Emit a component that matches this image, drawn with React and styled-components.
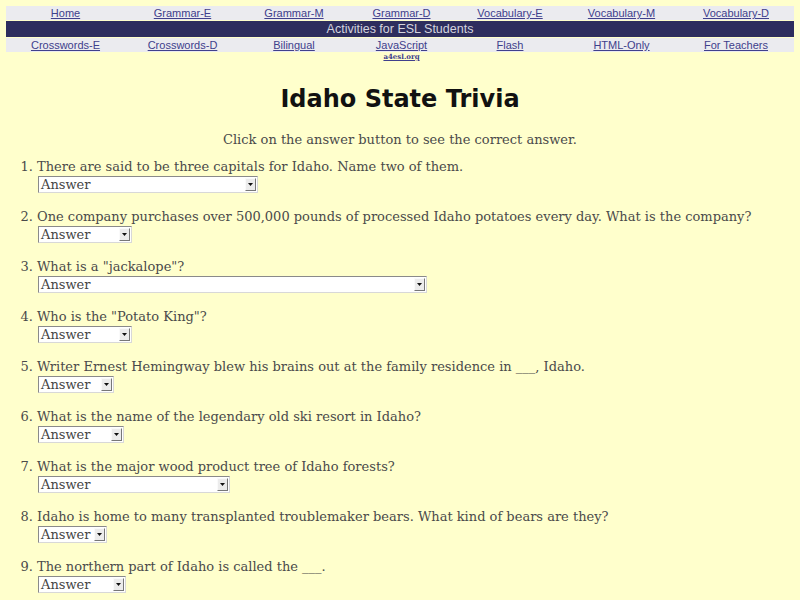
import React from "react";
import styled, { createGlobalStyle } from "styled-components";

const Global = createGlobalStyle`
  html, body { margin: 0; padding: 0; background: #ffffcc; }
  body { font-family: "DejaVu Serif", serif; color: #4a4a4a; }
`;

const Page = styled.div`
  padding: 6px 6px 0 6px;
`;

const cols = "119fr 115fr 108fr 107fr 110fr 113fr 116fr";

const NavRow = styled.div`
  display: grid;
  grid-template-columns: ${cols};
  background: #ebebef;
  height: 14px;
  align-items: center;
`;

const NavLink = styled.a`
  justify-self: center;
  font-family: "Liberation Sans", Arial, sans-serif;
  font-size: 11px;
  line-height: 14px;
  color: #40408c;
  text-decoration: underline;
`;

const Banner = styled.div`
  background: #2e2e5e;
  color: #d4d4de;
  font-family: "Liberation Sans", Arial, sans-serif;
  font-size: 12.5px;
  height: 16px;
  line-height: 16px;
  text-align: center;
  margin: 1px 0;
`;

const SubRow = styled.div`
  display: grid;
  grid-template-columns: ${cols};
  height: 10px;
  align-items: center;
`;

const SiteTag = styled.a`
  grid-column: 4;
  justify-self: center;
  font-family: "DejaVu Serif", serif;
  font-weight: bold;
  font-size: 7px;
  line-height: 10px;
  color: #40408c;
  text-decoration: underline;
`;

const Title = styled.h1`
  margin: 23px 0 0;
  text-align: center;
  font-family: "Comic Sans MS", "DejaVu Sans", sans-serif;
  font-weight: bold;
  font-size: 24px;
  line-height: 28px;
  color: #111;
`;

const Intro = styled.p`
  margin: 19px 0 0;
  text-align: center;
  font-size: 13px;
  line-height: 16px;
`;

const List = styled.ol`
  margin: 11px 0 0;
  padding-left: 31px;
  font-size: 13px;
  line-height: 16px;
`;

const Item = styled.li`
  margin-bottom: 16px;
`;

const Question = styled.div`
  height: 17px;
`;

const Answer = styled.div`
  display: flex;
  align-items: stretch;
  width: ${(p) => p.$w}px;
  height: 17px;
  box-sizing: border-box;
  margin-left: 1px;
  background: #fff;
  border-top: 1px solid #8a8a8a;
  border-left: 1px solid #8a8a8a;
  border-right: 1px solid #d8d8d8;
  border-bottom: 1px solid #d8d8d8;
`;

const AnswerText = styled.span`
  flex: 1;
  padding-left: 2px;
  font-size: 13px;
  line-height: 15px;
  color: #444;
  overflow: hidden;
  white-space: nowrap;
`;

const ArrowButton = styled.span`
  width: 11px;
  margin: 1px;
  box-sizing: border-box;
  background: #ececec;
  border-top: 1px solid #fafafa;
  border-left: 1px solid #fafafa;
  border-right: 1px solid #777;
  border-bottom: 1px solid #777;
  display: flex;
  align-items: center;
  justify-content: center;
`;

const questions = [
  ["There are said to be three capitals for Idaho. Name two of them.", 220],
  ["One company purchases over 500,000 pounds of processed Idaho potatoes every day. What is the company?", 94],
  ["What is a \"jackalope\"?", 389],
  ["Who is the \"Potato King\"?", 94],
  ["Writer Ernest Hemingway blew his brains out at the family residence in ___, Idaho.", 76],
  ["What is the name of the legendary old ski resort in Idaho?", 86],
  ["What is the major wood product tree of Idaho forests?", 192],
  ["Idaho is home to many transplanted troublemaker bears. What kind of bears are they?", 69],
  ["The northern part of Idaho is called the ___.", 88],
];

const topLinks = ["Home", "Grammar-E", "Grammar-M", "Grammar-D", "Vocabulary-E", "Vocabulary-M", "Vocabulary-D"];
const bottomLinks = ["Crosswords-E", "Crosswords-D", "Bilingual", "JavaScript", "Flash", "HTML-Only", "For Teachers"];

function AnswerBox({ width }) {
  return (
    <Answer $w={width}>
      <AnswerText>Answer</AnswerText>
      <ArrowButton>
        <svg width="5" height="3" viewBox="0 0 5 3">
          <path d="M0 0 H5 L2.5 3 Z" fill="#111" />
        </svg>
      </ArrowButton>
    </Answer>
  );
}

export default function App() {
  return (
    <Page>
      <Global />
      <NavRow>
        {topLinks.map((l) => (
          <NavLink key={l} href="#">{l}</NavLink>
        ))}
      </NavRow>
      <Banner>Activities for ESL Students</Banner>
      <NavRow>
        {bottomLinks.map((l) => (
          <NavLink key={l} href="#">{l}</NavLink>
        ))}
      </NavRow>
      <SubRow>
        <SiteTag href="#">a4esl.org</SiteTag>
      </SubRow>
      <Title>Idaho State Trivia</Title>
      <Intro>Click on the answer button to see the correct answer.</Intro>
      <List>
        {questions.map(([q, w]) => (
          <Item key={q}>
            <Question>{q}</Question>
            <AnswerBox width={w} />
          </Item>
        ))}
      </List>
    </Page>
  );
}
